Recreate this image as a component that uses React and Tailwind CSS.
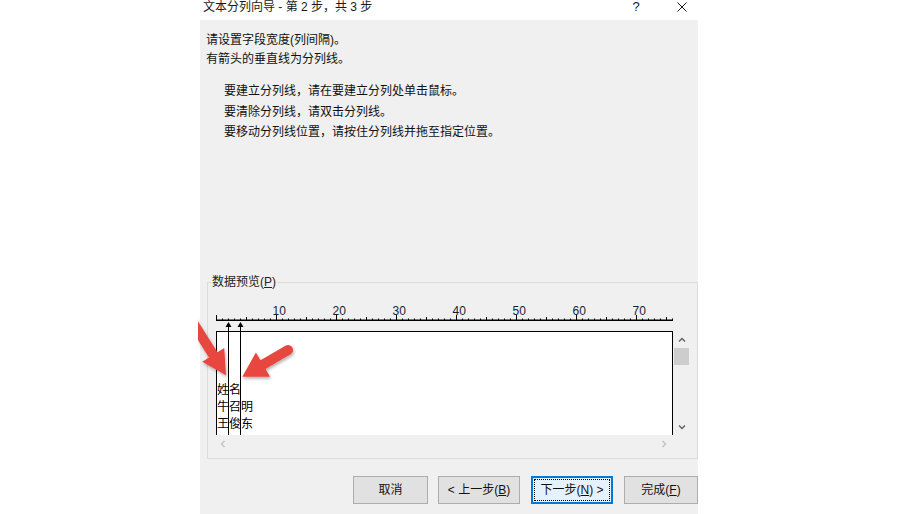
import React from "react";

function Ruler() {
  const ticks = [];
  for (let i = 0; i <= 76; i++) {
    const x = i * 6 + 0.5;
    const h = i % 10 === 0 ? 5 : i % 5 === 0 ? 3 : 1.5;
    ticks.push(<rect key={i} x={x - 0.5} y={20 - h} width={1} height={h} fill="#000" />);
  }
  const labels = [10, 20, 30, 40, 50, 60, 70];
  return (
    <svg width="462" height="31" viewBox="0 0 462 31" className="block">
      <rect x="0" y="19.5" width="457" height="1.5" fill="#000" />
      {ticks}
      {labels.map((n) => (
        <text
          key={n}
          x={n * 0.6 * 10 - 3.5}
          y="15"
          fontSize="12"
          fontFamily="Liberation Sans, sans-serif"
          fill="#1c1c30"
        >
          {n}
        </text>
      ))}
      {/* column break arrows */}
      <polygon points="12.5,22 9.5,27 15.5,27" fill="#000" />
      <rect x="12" y="25" width="1" height="6" fill="#000" />
      <polygon points="24.5,22 21.5,27 27.5,27" fill="#000" />
      <rect x="24" y="25" width="1" height="6" fill="#000" />
    </svg>
  );
}

function Chevron({ dir, color, size = 8 }) {
  const paths = {
    up: "M1 5.5 L4 2.5 L7 5.5",
    down: "M1 2.5 L4 5.5 L7 2.5",
    left: "M5.5 1 L2.5 4 L5.5 7",
    right: "M2.5 1 L5.5 4 L2.5 7",
  };
  return (
    <svg width={size} height={size} viewBox="0 0 8 8" className="block">
      <path d={paths[dir]} fill="none" stroke={color} strokeWidth="1.4" />
    </svg>
  );
}

function RedArrow({ x, y, angle, length, headLen = 23, headHalf = 13, shaftHalf = 5 }) {
  const s = length - headLen;
  const pts = `0,${-shaftHalf} ${s},${-shaftHalf} ${s},${-headHalf} ${length},0 ${s},${headHalf} ${s},${shaftHalf} 0,${shaftHalf}`;
  return (
    <g transform={`translate(${x} ${y}) rotate(${angle})`}>
      <circle cx="0" cy="0" r={shaftHalf} fill="#e8473f" />
      <polygon points={pts} fill="#e8473f" />
    </g>
  );
}

function Btn({ w, children, focused }) {
  if (focused) {
    return (
      <div className={`${w} h-[28px] border-2 border-[#0078d7] bg-[#e5f1fb] p-[1px]`}>
        <div className="h-full w-full border border-dotted border-black flex items-center justify-center leading-[16px]">
          {children}
        </div>
      </div>
    );
  }
  return (
    <div className={`${w} h-[28px] border border-[#adadad] bg-[#e1e1e1] flex items-center justify-center leading-[16px]`}>
      {children}
    </div>
  );
}

export default function App() {
  return (
    <div className="relative w-[900px] h-[514px] bg-white overflow-hidden font-['Liberation_Sans','Noto_Sans_CJK_SC',sans-serif] text-[12px] text-black">
      <div className="ml-[200px] w-[498px] h-[514px] flex flex-col">
        {/* title bar */}
        <div className="h-[20px] shrink-0 bg-white flex items-start leading-[14px] text-[12px] text-[#1a1a1a]">
          <span className="ml-[3px]">文本分列向导 - 第 2 步，共 3 步</span>
          <span className="ml-auto w-[14px] text-center text-[13px] leading-[14px]">?</span>
          <div className="ml-[34px] mr-[11px] mt-[2px] w-[10px] h-[10px]">
            <svg width="10" height="10" viewBox="0 0 10 10" className="block">
              <path d="M0.5 0.5 L9.5 9.5 M9.5 0.5 L0.5 9.5" stroke="#1a1a1a" strokeWidth="1" />
            </svg>
          </div>
        </div>

        {/* body */}
        <div className="flex-1 bg-[#f0f0f0] pl-[6px] flex flex-col">
          <div className="h-[262px] shrink-0 pt-[11px] text-[#111]">
            <div className="leading-[19px]">
              <div>请设置字段宽度(列间隔)。</div>
              <div>有箭头的垂直线为分列线。</div>
            </div>
            <div className="ml-[18px] mt-[12px] leading-[20.5px]">
              <div>要建立分列线，请在要建立分列处单击鼠标。</div>
              <div>要清除分列线，请双击分列线。</div>
              <div>要移动分列线位置，请按住分列线并拖至指定位置。</div>
            </div>
          </div>

          {/* group box */}
          <div className="relative ml-[1px] w-[491px] h-[177px] shrink-0 border border-[#dcdcdc] flex flex-col">
            <span className="absolute left-[3px] top-[-9px] px-[1px] bg-[#f0f0f0] leading-[16px] text-[#222]">
              数据预览(<span className="underline">P</span>)
            </span>
            <div className="ml-[8px] mt-[17px]">
              <Ruler />
            </div>
            <div className="flex ml-[8px]">
              <div className="flex flex-col w-[457px]">
                <div className="relative h-[104px] bg-white border-l border-t border-r border-black pt-[48px] text-[12px] leading-[17px] font-['Noto_Sans_CJK_SC',sans-serif]">
                  <div>姓名</div>
                  <div>牛召明</div>
                  <div>王俊东</div>
                  <div className="absolute left-[11px] top-0 bottom-0 w-px bg-black" />
                  <div className="absolute left-[23px] top-0 bottom-0 w-px bg-black" />
                </div>
                <div className="h-[17px] flex items-center justify-between pl-[3px] pr-[5px]">
                  <Chevron dir="left" color="#c2c2c2" />
                  <Chevron dir="right" color="#c2c2c2" />
                </div>
              </div>
              <div className="w-[17px] h-[104px] flex flex-col items-center">
                <div className="h-[17px] flex items-center justify-center">
                  <Chevron dir="up" color="#606060" />
                </div>
                <div className="w-[15px] h-[17px] bg-[#cdcdcd]" />
                <div className="flex-1" />
                <div className="h-[17px] flex items-center justify-center">
                  <Chevron dir="down" color="#606060" />
                </div>
              </div>
            </div>
          </div>

          {/* buttons */}
          <div className="flex mt-[17px] ml-[147px] gap-[10px] text-[#111]">
            <Btn w="w-[75px]">取消</Btn>
            <Btn w="w-[82px]">
              &lt; 上一步(<span className="underline">B</span>)
            </Btn>
            <div className="ml-[1px]">
              <Btn w="w-[82px]" focused>
                下一步(<span className="underline">N</span>) &gt;
              </Btn>
            </div>
            <div className="ml-[1px]">
              <Btn w="w-[74px]">
                完成(<span className="underline">F</span>)
              </Btn>
            </div>
          </div>
        </div>
      </div>

      {/* annotation arrows */}
      <svg className="absolute left-0 top-0 pointer-events-none" width="900" height="514" viewBox="0 0 900 514">
        <defs>
          <clipPath id="clipL">
            <rect x="198" y="0" width="702" height="514" />
          </clipPath>
          <filter id="sh" x="-20%" y="-20%" width="140%" height="140%">
            <feDropShadow dx="1" dy="2" stdDeviation="1.5" floodColor="#000" floodOpacity="0.3" />
          </filter>
        </defs>
        <g clipPath="url(#clipL)" filter="url(#sh)">
          <RedArrow x={185} y={310} angle={57.8} length={77} headLen={24} headHalf={13} shaftHalf={5} />
        </g>
        <g filter="url(#sh)">
          <RedArrow x={288} y={350} angle={149.6} length={53} headLen={24} headHalf={14} shaftHalf={5} />
        </g>
      </svg>
    </div>
  );
}
